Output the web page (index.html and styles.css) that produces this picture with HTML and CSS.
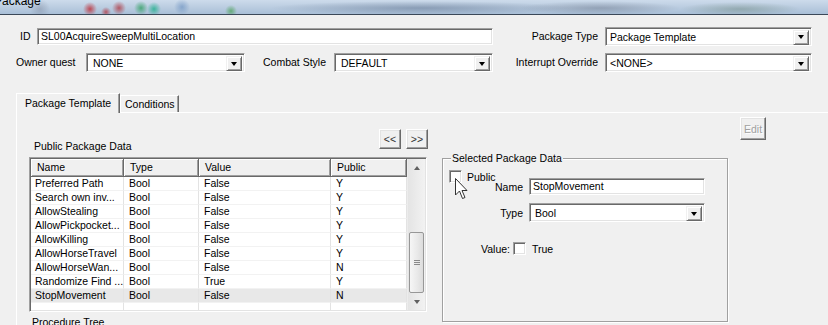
FILE: index.html
```html
<!DOCTYPE html>
<html lang="en">
<head>
  <meta charset="UTF-8">
  <title>Package</title>
  <link rel="stylesheet" href="styles.css">
</head>
<body>
  <div class="titlebar"><span class="title">Package</span></div>

  <div class="row row-top">
    <label class="lbl lbl-id">ID</label>
    <div class="edit edit-id">SL00AcquireSweepMultiLocation</div>
    <label class="lbl lbl-right">Package Type</label>
    <div class="combo combo-right">
      <span class="combo-text">Package Template</span>
      <span class="combo-btn"><i class="arrow-down"></i></span>
    </div>
  </div>

  <div class="row row-second">
    <label class="lbl lbl-owner">Owner quest</label>
    <div class="combo combo-left">
      <span class="combo-text pad-list">NONE</span>
      <span class="combo-btn"><i class="arrow-down"></i></span>
    </div>
    <label class="lbl lbl-combat">Combat Style</label>
    <div class="combo combo-left">
      <span class="combo-text pad-list">DEFAULT</span>
      <span class="combo-btn"><i class="arrow-down"></i></span>
    </div>
    <label class="lbl lbl-right">Interrupt Override</label>
    <div class="combo combo-right">
      <span class="combo-text">&lt;NONE&gt;</span>
      <span class="combo-btn"><i class="arrow-down"></i></span>
    </div>
  </div>

  <div class="tabs">
    <div class="tab tab-active">Package Template</div>
    <div class="tab">Conditions</div>
  </div>

  <div class="panel">
    <div class="col-left">
      <div class="pkg-head">
        <span class="pkg-label">Public Package Data</span>
        <div class="nav">
          <button class="btn btn-nav">&lt;&lt;</button>
          <button class="btn btn-nav">&gt;&gt;</button>
        </div>
      </div>

      <div class="list">
        <table class="grid">
          <thead>
            <tr>
              <th class="c-name">Name</th>
              <th class="c-type">Type</th>
              <th class="c-value">Value</th>
              <th class="c-public">Public</th>
            </tr>
          </thead>
          <tbody id="rows"></tbody>
        </table>
        <div class="scrollbar">
          <div class="sb-arrow"><i class="arrow-up"></i></div>
          <div class="sb-track"></div>
          <div class="sb-thumb"><i class="grip"></i></div>
          <div class="sb-arrow"><i class="arrow-small-down"></i></div>
        </div>
      </div>

      <div class="proc-label">Procedure Tree</div>
    </div>

    <div class="col-right">
      <button class="btn btn-edit" disabled>Edit</button>

      <div class="groupbox">
        <div class="gb-title">Selected Package Data</div>
        <div class="gb-public">
          <span class="check"></span>
          <span>Public</span>
        </div>
        <div class="gb-row gb-name">
          <label class="gb-lbl">Name</label>
          <div class="edit gb-field">StopMovement</div>
        </div>
        <div class="gb-row gb-type">
          <label class="gb-lbl">Type</label>
          <div class="combo gb-field">
            <span class="combo-text pad-type">Bool</span>
            <span class="combo-btn"><i class="arrow-down"></i></span>
          </div>
        </div>
        <div class="gb-value">
          <span>Value:</span>
          <span class="check"></span>
          <span>True</span>
        </div>
        <svg class="cursor" width="13" height="22" viewBox="0 0 13 22">
          <path d="M0.5 0.5 L0.5 17 L4.5 13 L7.5 20.5 L10 19.5 L7 12.5 L12 12.5 Z" fill="#fff" stroke="#333" stroke-width="1"/>
        </svg>
      </div>
    </div>
  </div>

  <script>
    const dados = [
      ['Preferred Path', 'Bool', 'False', 'Y'],
      ['Search own inv...', 'Bool', 'False', 'Y'],
      ['AllowStealing', 'Bool', 'False', 'Y'],
      ['AllowPickpocket...', 'Bool', 'False', 'Y'],
      ['AllowKilling', 'Bool', 'False', 'Y'],
      ['AllowHorseTravel', 'Bool', 'False', 'Y'],
      ['AllowHorseWan...', 'Bool', 'False', 'N'],
      ['Randomize Find ...', 'Bool', 'True', 'Y'],
      ['StopMovement', 'Bool', 'False', 'N']
    ];

    const corpo = document.getElementById('rows');

    dados.forEach((d, i) => {
      const linha = document.createElement('tr');
      if (i === dados.length - 1) linha.className = 'selected';
      linha.innerHTML = `
        <td>${d[0]}</td>
        <td>${d[1]}</td>
        <td>${d[2]}</td>
        <td>${d[3]}</td>
      `;
      corpo.appendChild(linha);
    });

    // partial empty row at the bottom of the list
    const resto = document.createElement('tr');
    resto.className = 'filler';
    resto.innerHTML = '<td></td><td></td><td></td><td></td>';
    corpo.appendChild(resto);
  </script>
</body>
</html>
```

FILE: styles.css
```css
* {
  box-sizing: border-box;
}

html, body {
  margin: 0;
  padding: 0;
}

body {
  width: 828px;
  height: 325px;
  overflow: hidden;
  background-color: #f0f0f0;
  font-family: "Liberation Sans", Arial, sans-serif;
  font-size: 10.5px;
  color: #000;
}

/* window caption, blurred */
.titlebar {
  height: 15px;
  overflow: hidden;
  border-bottom: 1px solid #3b4858;
  background:
    radial-gradient(circle at 90px 9px, rgba(190, 50, 60, 0.85), transparent 7px),
    radial-gradient(circle at 106px 12px, rgba(180, 50, 60, 0.75), transparent 5px),
    radial-gradient(circle at 119px 8px, rgba(175, 60, 70, 0.8), transparent 7px),
    radial-gradient(circle at 141px 8px, rgba(50, 160, 100, 0.8), transparent 7px),
    radial-gradient(circle at 154px 9px, rgba(30, 175, 140, 0.8), transparent 7px),
    radial-gradient(circle at 231px 11px, rgba(70, 160, 80, 0.7), transparent 6px),
    radial-gradient(circle at 182px 7px, rgba(100, 140, 190, 0.6), transparent 8px),
    radial-gradient(circle at 40px 9px, rgba(120, 130, 150, 0.4), transparent 10px),
    radial-gradient(ellipse 150px 7px at 420px 8px, rgba(80, 100, 130, 0.45), transparent),
    radial-gradient(ellipse 80px 7px at 600px 8px, rgba(90, 100, 120, 0.4), transparent),
    radial-gradient(ellipse 60px 7px at 740px 9px, rgba(80, 110, 90, 0.35), transparent),
    linear-gradient(#cddbeb, #a9bfd7);
}

.title {
  display: block;
  margin: -7px 0 0 -6px;
  font-size: 12px;
  line-height: 16px;
}

/* top fields */
.row {
  display: flex;
  align-items: center;
}

.row-top {
  height: 18px;
  margin-top: 12px;
}

.row-second {
  height: 19px;
  margin-top: 8px;
}

.lbl {
  line-height: 13px;
  white-space: nowrap;
}

.lbl-id {
  margin-left: 20px;
  width: 17px;
}

.lbl-owner {
  margin-left: 16px;
  width: 70px;
}

.lbl-combat {
  margin-left: 18px;
  width: 71px;
}

.lbl-right {
  width: 112px;
  padding-right: 7px;
  text-align: right;
}

.edit, .combo, .check {
  background: #fff;
  border: 1px solid;
  border-color: #a0a0a0 #fff #fff #a0a0a0;
  box-shadow: inset 1px 1px #696969, inset -1px -1px #e3e3e3;
}

.edit {
  height: 17px;
  padding: 0 0 0 3px;
  line-height: 15px;
  white-space: nowrap;
}

.edit-id {
  width: 456px;
  height: 17px;
}

.combo {
  height: 19px;
  padding: 2px;
  display: flex;
}

.combo-left {
  width: 159px;
}

.combo-right {
  width: 207px;
}

.combo-text {
  flex: 1;
  padding-left: 2px;
  line-height: 15px;
  white-space: nowrap;
}

.pad-list {
  padding-left: 4px;
}

.pad-type {
  padding-left: 3px;
}

.combo-btn {
  width: 16px;
  height: 15px;
  background: #f0f0f0;
  border: 1px solid;
  border-color: #f0f0f0 #696969 #696969 #f0f0f0;
  box-shadow: inset 1px 1px #fff, inset -1px -1px #a0a0a0;
  display: flex;
  align-items: center;
  justify-content: center;
}

.arrow-down {
  width: 1px;
  height: 0;
  border-left: 3px solid transparent;
  border-right: 3px solid transparent;
  border-top: 4px solid #000;
}

/* tab control */
.tabs {
  display: flex;
  align-items: flex-end;
  height: 19px;
  margin: 21px 0 0 16px;
}

.tab {
  height: 17px;
  width: 59px;
  padding-left: 5px;
  line-height: 16px;
  border-top: 1px solid #fff;
  border-right: 1px solid #696969;
  box-shadow: inset -1px 0 #a0a0a0, inset 1px 0 #fff;
  white-space: nowrap;
}

.tab-active {
  position: relative;
  z-index: 1;
  height: 20px;
  width: 104px;
  margin-bottom: -1px;
  padding-left: 8px;
  line-height: 18px;
  background: #f0f0f0;
  border-left: 1px solid #fff;
  box-shadow: inset -1px 0 #a0a0a0;
  align-self: flex-start;
}

.panel {
  display: flex;
  width: 830px;
  height: 213px;
  margin-left: 16px;
  border-top: 1px solid #fff;
  border-left: 1px solid #fff;
}

.col-left {
  width: 399px;
  margin-left: 12px;
  flex-shrink: 0;
}

.pkg-head {
  display: flex;
  align-items: flex-start;
  height: 44px;
  padding-top: 16px;
}

.pkg-label {
  margin: 11px 0 0 5px;
  line-height: 13px;
}

.nav {
  display: flex;
  gap: 5px;
  margin-left: auto;
}

.btn {
  font-family: inherit;
  font-size: 10.5px;
  color: #000;
  background: #f0f0f0;
  border: 1px solid;
  border-color: #fff #696969 #696969 #fff;
  box-shadow: inset -1px -1px #a0a0a0, inset 1px 1px #e3e3e3;
  padding: 0;
  display: flex;
  align-items: center;
  justify-content: center;
}

.btn-nav {
  width: 22px;
  height: 20px;
  color: #333;
}

/* list view */
.list {
  display: flex;
  width: 398px;
  height: 155px;
  padding: 1px;
  background: #fff;
  border: 1px solid;
  border-color: #a0a0a0 #fff #fff #a0a0a0;
  box-shadow: inset 1px 1px #696969, inset -1px -1px #e3e3e3;
}

.grid {
  width: 376px;
  border-collapse: separate;
  border-spacing: 0;
  table-layout: fixed;
  align-self: flex-start;
}

.c-name { width: 93px; }
.c-type { width: 75px; }
.c-value { width: 132px; }
.c-public { width: 76px; }

.grid th {
  font-weight: normal;
  text-align: left;
  padding: 0 0 0 6px;
  line-height: 17px;
  background: #f0f0f0;
  border-right: 1px solid #696969;
  border-bottom: 1px solid #696969;
  box-shadow: inset 1px 1px #fff, inset -1px -1px #a0a0a0;
  white-space: nowrap;
}

.grid td {
  padding: 0 0 0 5px;
  line-height: 13px;
  border-right: 1px solid #e3e3e3;
  border-bottom: 1px solid #f2f2f2;
  white-space: nowrap;
  overflow: hidden;
}

.grid td:first-child {
  padding-left: 4px;
}

.grid tr.selected td {
  background: #e8e8e8;
}

.grid tr.filler td {
  height: 7px;
  line-height: 0;
  border-bottom: none;
}

.scrollbar {
  width: 18px;
  display: flex;
  flex-direction: column;
  background: linear-gradient(90deg, #e4e4e4, #f2f2f2);
  border-left: 1px solid #ececec;
}

.sb-arrow {
  height: 17px;
  display: flex;
  align-items: center;
  justify-content: center;
}

.arrow-up {
  width: 1px;
  height: 0;
  border-left: 3px solid transparent;
  border-right: 3px solid transparent;
  border-bottom: 4px solid #606060;
}

.arrow-small-down {
  width: 1px;
  height: 0;
  border-left: 3px solid transparent;
  border-right: 3px solid transparent;
  border-top: 4px solid #606060;
}

.sb-track {
  flex: 1;
}

.sb-thumb {
  height: 61px;
  margin: 0 1px;
  border: 1px solid #979797;
  border-radius: 2px;
  background: linear-gradient(90deg, #f6f6f6, #e8e8e8 60%, #dcdcdc);
  display: flex;
  align-items: center;
  justify-content: center;
}

.grip {
  width: 6px;
  height: 5px;
  border-top: 1px solid #8a8a8a;
  border-bottom: 1px solid #8a8a8a;
  background: linear-gradient(#8a8a8a, #8a8a8a) no-repeat 0 1px / 6px 1px;
}

.proc-label {
  margin: 4px 0 0 3px;
  line-height: 13px;
}

/* right side */
.col-right {
  margin-left: 14px;
  width: 330px;
  flex-shrink: 0;
}

.btn-edit {
  width: 26px;
  height: 23px;
  margin: 4px 0 0 298px;
  color: #a0a0a0;
  text-shadow: 1px 1px #fff;
}

.groupbox {
  position: relative;
  width: 286px;
  height: 164px;
  margin-top: 18px;
  border: 1px solid #a0a0a0;
  box-shadow: inset 1px 1px #fff, 1px 1px #fff;
}

.gb-title {
  width: fit-content;
  margin: -7px 0 0 8px;
  padding: 0 1px;
  line-height: 13px;
  background: #f0f0f0;
}

.gb-public {
  display: flex;
  align-items: center;
  gap: 5px;
  height: 13px;
  margin: 5px 0 0 6px;
}

.check {
  width: 13px;
  height: 13px;
  display: inline-block;
  flex-shrink: 0;
}

.gb-row {
  display: flex;
  align-items: center;
}

.gb-name {
  height: 17px;
  margin-top: -5px;
}

.gb-type {
  height: 19px;
  margin-top: 8px;
}

.gb-lbl {
  width: 86px;
  padding-right: 6px;
  text-align: right;
}

.gb-field {
  width: 176px;
}

.gb-value {
  display: flex;
  align-items: center;
  height: 13px;
  margin: 20px 0 0 38px;
}

.gb-value .check {
  margin: 0 6px 0 3px;
}

.cursor {
  position: absolute;
  left: 12px;
  top: 19px;
}
```
